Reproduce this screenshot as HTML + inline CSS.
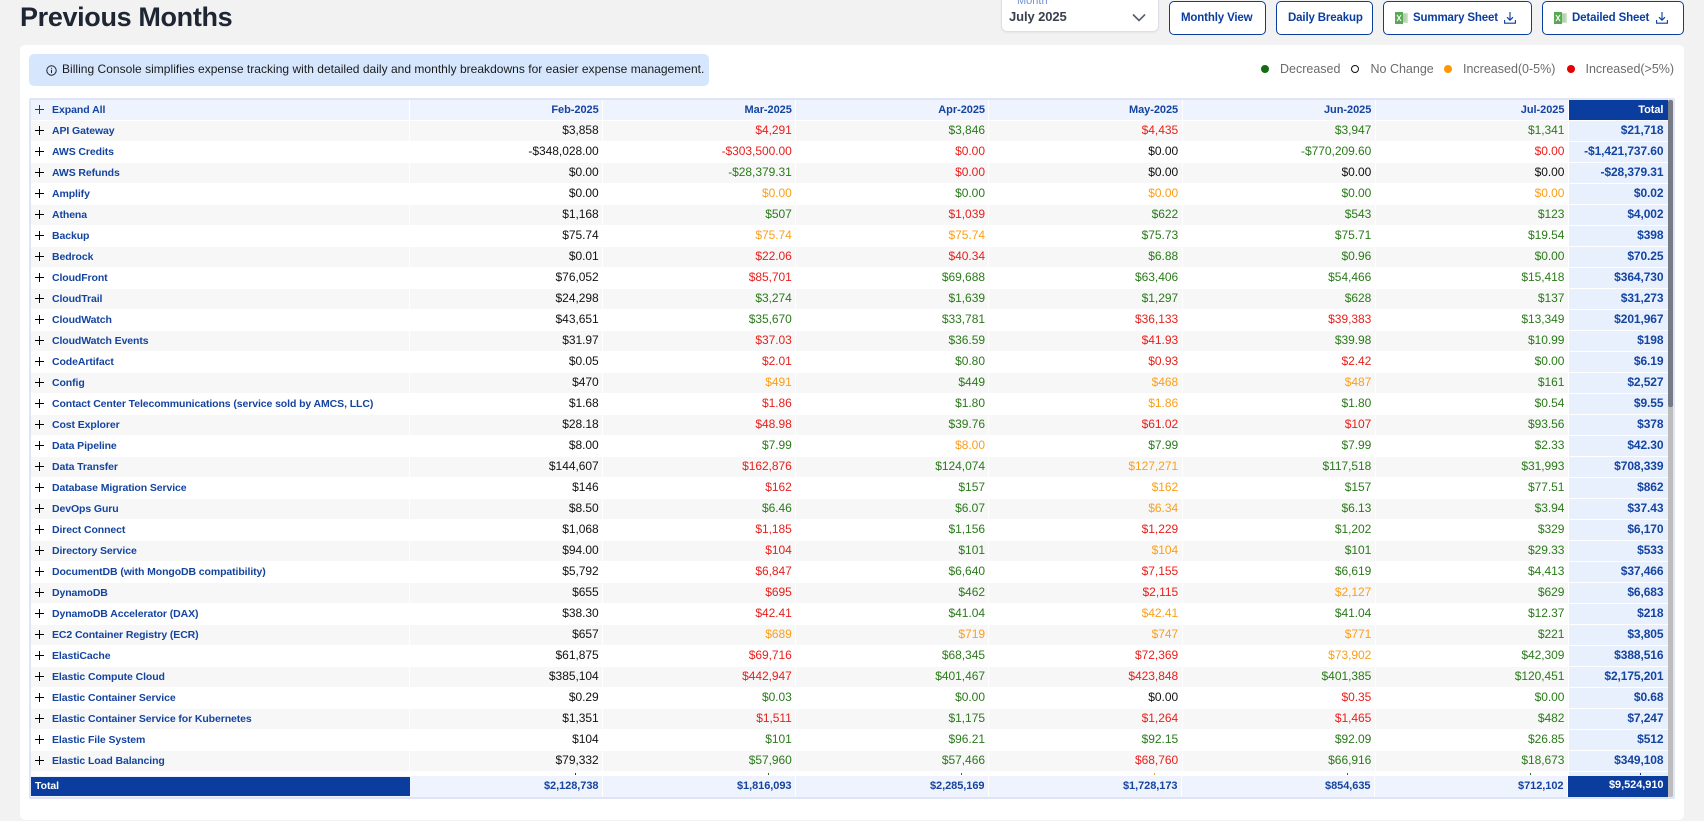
<!DOCTYPE html>
<html><head><meta charset="utf-8"><title>Previous Months</title>
<style>
*{box-sizing:border-box}
html,body{margin:0;padding:0;width:1704px;height:821px;overflow:hidden;background:#f2f2f2;font-family:"Liberation Sans",sans-serif}
.abs{position:absolute}
h1{position:absolute;left:20px;top:1px;margin:0;font-size:27px;line-height:32px;font-weight:700;color:#1e2533;letter-spacing:-.35px}
.sel{position:absolute;left:1001px;top:0;width:158px;height:32px;background:#fff;border:1px solid #dde0e8;border-top:0;border-radius:0 0 6px 6px;box-shadow:0 1px 2px #0000000d}
.sel .l{position:absolute;left:15px;top:-5px;font-size:11px;line-height:13px;color:#6f92d6}
.sel .v{position:absolute;left:7px;top:9px;font-size:13px;line-height:16px;font-weight:700;color:#3a404c;letter-spacing:-.1px}
.sel svg{position:absolute;left:130px;top:13px}
.btn{position:absolute;top:1px;height:34px;border:1.5px solid #0b3d9f;border-radius:5px;background:#fff;color:#0b3d9f;font-size:11.5px;letter-spacing:-.15px;font-weight:700;line-height:32px;white-space:nowrap}
.btn span{position:absolute;top:0}
.btn svg{position:absolute}
.card{position:absolute;left:20px;top:45px;width:1664px;height:775px;background:#fff;border-radius:5px}
.info{position:absolute;left:29px;top:54px;width:680px;height:32px;background:#d6e7fd;border-radius:5px;font-size:12px;letter-spacing:.023px;line-height:31px;color:#1a1a1a;white-space:nowrap}
.info span{position:absolute;left:33px;top:0}
.info svg{position:absolute;left:17px;top:11px}
.lg{position:absolute;top:62px;font-size:12.5px;line-height:15px;color:#6b6b6b;white-space:nowrap}
.dot{position:absolute;top:65px;width:8px;height:8px;border-radius:50%}
.frame{position:absolute;left:29px;top:98px;width:1646px;height:701px;background:#e0e5f5;border-radius:2px}
.inner{position:absolute;left:31px;top:100px;width:1637px;height:697px;background:#fff}
.g1{display:grid;grid-template-columns:379px repeat(6,193.17px) 99px;height:21px;border-top:1px solid #fff}
.g1:nth-child(odd)>*:not(.t){background:#f7f7f7}
.g1>*{display:block;font-size:12px;letter-spacing:-.04px;line-height:19px;height:20px;text-align:right;padding-right:3.5px;border-right:1px solid #fff;white-space:nowrap;color:#111;text-decoration:none;font-style:normal}
.g1>.n{position:relative;text-align:left;padding-left:21px;font-size:10.5px;letter-spacing:-.1px;font-weight:700;color:#14449f;line-height:21px}
.n i{position:absolute;left:4px;top:5px;width:9px;height:9px;background:linear-gradient(#000,#000) 0 4px/9px 1px no-repeat,linear-gradient(#000,#000) 4px 0/1px 9px no-repeat}
.g1>.t{background:#e8f0fe;color:#14449f;font-weight:700;border-right:0;padding-right:4.5px;letter-spacing:-.1px}
.g1>.gr{color:#2a7a1a}.g1>.r{color:#e8201c}.g1>.o{color:#fb9f1a}
.head,.foot{position:absolute;left:31px;display:grid;background:#eff3fd}
.head{top:100px;height:20px;grid-template-columns:379px repeat(6,193.17px) 99px}
.foot{top:776px;height:21px;width:1637px;grid-template-columns:379px repeat(6,193px) 100px}
.head>*,.foot>*{font-size:11px;letter-spacing:-.05px;font-weight:700;color:#14449f;text-align:right;padding-right:3.5px;border-right:1px solid #fff;white-space:nowrap;position:relative}
.head>*{line-height:20px}
.foot>*{line-height:20px}
.head>:first-child{font-size:10.5px}
.navy{background:#0b3d9f;color:#fff !important;border-right:0 !important}
.tick{position:absolute;top:773px;width:1px;height:2px}
.sb{position:absolute;left:1668px;top:100px;width:5px;height:697px;background:#bdbdbd;border-radius:2px}
.sb div{width:5px;height:307px;background:#767b86;border-radius:2px}
</style></head><body>
<h1>Previous Months</h1>
<div class="sel"><div class="l">Month</div><div class="v">July 2025</div><svg width="14" height="9" viewBox="0 0 14 9" fill="none" stroke="#555c68" stroke-width="1.6"><path d="M1 1.5l6 6 6-6"/></svg></div>
<div class="btn" style="left:1169px;width:97px"><span style="left:11px">Monthly View</span></div>
<div class="btn" style="left:1276px;width:97px"><span style="left:11px">Daily Breakup</span></div>
<div class="btn" style="left:1383px;width:149px"><svg style="left:10.5px;top:9.5px" width="13" height="12" viewBox="0 0 13 12"><rect x="6" y="1" width="7" height="10" fill="#cfe5cb"/><path d="M8 3h3.5M8 5h3.5M8 7h3.5M8 9h3.5" stroke="#7db878" stroke-width=".8"/><rect x="0" y="0" width="8" height="12" fill="#5aa854"/><path d="M2 3l4 6M6 3l-4 6" stroke="#fff" stroke-width="1.1"/></svg><span style="left:29px">Summary Sheet</span><svg style="left:119.5px;top:9.5px" width="12" height="12" viewBox="0 0 12 12" fill="none" stroke="#0b3d9f" stroke-width="1.1"><path d="M6 0v8M3 5.2L6 8.2 9 5.2M.6 8v3.2h10.8V8"/></svg></div>
<div class="btn" style="left:1542px;width:142px"><svg style="left:10.5px;top:9.5px" width="13" height="12" viewBox="0 0 13 12"><rect x="6" y="1" width="7" height="10" fill="#cfe5cb"/><path d="M8 3h3.5M8 5h3.5M8 7h3.5M8 9h3.5" stroke="#7db878" stroke-width=".8"/><rect x="0" y="0" width="8" height="12" fill="#5aa854"/><path d="M2 3l4 6M6 3l-4 6" stroke="#fff" stroke-width="1.1"/></svg><span style="left:29px">Detailed Sheet</span><svg style="left:112.5px;top:9.5px" width="12" height="12" viewBox="0 0 12 12" fill="none" stroke="#0b3d9f" stroke-width="1.1"><path d="M6 0v8M3 5.2L6 8.2 9 5.2M.6 8v3.2h10.8V8"/></svg></div>
<div class="card"></div>
<div class="info"><svg width="11" height="11" viewBox="0 0 11 11" fill="none" stroke="#222" stroke-width="1"><circle cx="5.5" cy="5.5" r="4.7"/><path d="M5.5 4.8v3.2M5.5 2.8v1"/></svg><span>Billing Console simplifies expense tracking with detailed daily and monthly breakdowns for easier expense management.</span></div>
<div class="dot" style="left:1261px;background:#146c14"></div><div class="lg" style="left:1280px">Decreased</div>
<div class="dot" style="left:1351px;background:#fff;border:1.5px solid #111"></div><div class="lg" style="left:1370.5px">No Change</div>
<div class="dot" style="left:1444px;background:#ff9800"></div><div class="lg" style="left:1463px">Increased(0-5%)</div>
<div class="dot" style="left:1567px;background:#e60000"></div><div class="lg" style="left:1585.5px">Increased(&gt;5%)</div>
<div class="frame"></div><div class="inner"></div>
<div class="abs" style="left:31px;top:120px;width:1637px;height:651px;overflow:hidden">
<div class="g1"><a class="n"><i></i>API Gateway</a><span>$3,858</span><span class="r">$4,291</span><span class="gr">$3,846</span><span class="r">$4,435</span><span class="gr">$3,947</span><span class="gr">$1,341</span><span class="t">$21,718</span></div>
<div class="g1"><a class="n"><i></i>AWS Credits</a><span>-$348,028.00</span><span class="r">-$303,500.00</span><span class="r">$0.00</span><span>$0.00</span><span class="gr">-$770,209.60</span><span class="r">$0.00</span><span class="t">-$1,421,737.60</span></div>
<div class="g1"><a class="n"><i></i>AWS Refunds</a><span>$0.00</span><span class="gr">-$28,379.31</span><span class="r">$0.00</span><span>$0.00</span><span>$0.00</span><span>$0.00</span><span class="t">-$28,379.31</span></div>
<div class="g1"><a class="n"><i></i>Amplify</a><span>$0.00</span><span class="o">$0.00</span><span class="gr">$0.00</span><span class="o">$0.00</span><span class="gr">$0.00</span><span class="o">$0.00</span><span class="t">$0.02</span></div>
<div class="g1"><a class="n"><i></i>Athena</a><span>$1,168</span><span class="gr">$507</span><span class="r">$1,039</span><span class="gr">$622</span><span class="gr">$543</span><span class="gr">$123</span><span class="t">$4,002</span></div>
<div class="g1"><a class="n"><i></i>Backup</a><span>$75.74</span><span class="o">$75.74</span><span class="o">$75.74</span><span class="gr">$75.73</span><span class="gr">$75.71</span><span class="gr">$19.54</span><span class="t">$398</span></div>
<div class="g1"><a class="n"><i></i>Bedrock</a><span>$0.01</span><span class="r">$22.06</span><span class="r">$40.34</span><span class="gr">$6.88</span><span class="gr">$0.96</span><span class="gr">$0.00</span><span class="t">$70.25</span></div>
<div class="g1"><a class="n"><i></i>CloudFront</a><span>$76,052</span><span class="r">$85,701</span><span class="gr">$69,688</span><span class="gr">$63,406</span><span class="gr">$54,466</span><span class="gr">$15,418</span><span class="t">$364,730</span></div>
<div class="g1"><a class="n"><i></i>CloudTrail</a><span>$24,298</span><span class="gr">$3,274</span><span class="gr">$1,639</span><span class="gr">$1,297</span><span class="gr">$628</span><span class="gr">$137</span><span class="t">$31,273</span></div>
<div class="g1"><a class="n"><i></i>CloudWatch</a><span>$43,651</span><span class="gr">$35,670</span><span class="gr">$33,781</span><span class="r">$36,133</span><span class="r">$39,383</span><span class="gr">$13,349</span><span class="t">$201,967</span></div>
<div class="g1"><a class="n"><i></i>CloudWatch Events</a><span>$31.97</span><span class="r">$37.03</span><span class="gr">$36.59</span><span class="r">$41.93</span><span class="gr">$39.98</span><span class="gr">$10.99</span><span class="t">$198</span></div>
<div class="g1"><a class="n"><i></i>CodeArtifact</a><span>$0.05</span><span class="r">$2.01</span><span class="gr">$0.80</span><span class="r">$0.93</span><span class="r">$2.42</span><span class="gr">$0.00</span><span class="t">$6.19</span></div>
<div class="g1"><a class="n"><i></i>Config</a><span>$470</span><span class="o">$491</span><span class="gr">$449</span><span class="o">$468</span><span class="o">$487</span><span class="gr">$161</span><span class="t">$2,527</span></div>
<div class="g1"><a class="n"><i></i>Contact Center Telecommunications (service sold by AMCS, LLC)</a><span>$1.68</span><span class="r">$1.86</span><span class="gr">$1.80</span><span class="o">$1.86</span><span class="gr">$1.80</span><span class="gr">$0.54</span><span class="t">$9.55</span></div>
<div class="g1"><a class="n"><i></i>Cost Explorer</a><span>$28.18</span><span class="r">$48.98</span><span class="gr">$39.76</span><span class="r">$61.02</span><span class="r">$107</span><span class="gr">$93.56</span><span class="t">$378</span></div>
<div class="g1"><a class="n"><i></i>Data Pipeline</a><span>$8.00</span><span class="gr">$7.99</span><span class="o">$8.00</span><span class="gr">$7.99</span><span class="gr">$7.99</span><span class="gr">$2.33</span><span class="t">$42.30</span></div>
<div class="g1"><a class="n"><i></i>Data Transfer</a><span>$144,607</span><span class="r">$162,876</span><span class="gr">$124,074</span><span class="o">$127,271</span><span class="gr">$117,518</span><span class="gr">$31,993</span><span class="t">$708,339</span></div>
<div class="g1"><a class="n"><i></i>Database Migration Service</a><span>$146</span><span class="r">$162</span><span class="gr">$157</span><span class="o">$162</span><span class="gr">$157</span><span class="gr">$77.51</span><span class="t">$862</span></div>
<div class="g1"><a class="n"><i></i>DevOps Guru</a><span>$8.50</span><span class="gr">$6.46</span><span class="gr">$6.07</span><span class="o">$6.34</span><span class="gr">$6.13</span><span class="gr">$3.94</span><span class="t">$37.43</span></div>
<div class="g1"><a class="n"><i></i>Direct Connect</a><span>$1,068</span><span class="r">$1,185</span><span class="gr">$1,156</span><span class="r">$1,229</span><span class="gr">$1,202</span><span class="gr">$329</span><span class="t">$6,170</span></div>
<div class="g1"><a class="n"><i></i>Directory Service</a><span>$94.00</span><span class="r">$104</span><span class="gr">$101</span><span class="o">$104</span><span class="gr">$101</span><span class="gr">$29.33</span><span class="t">$533</span></div>
<div class="g1"><a class="n"><i></i>DocumentDB (with MongoDB compatibility)</a><span>$5,792</span><span class="r">$6,847</span><span class="gr">$6,640</span><span class="r">$7,155</span><span class="gr">$6,619</span><span class="gr">$4,413</span><span class="t">$37,466</span></div>
<div class="g1"><a class="n"><i></i>DynamoDB</a><span>$655</span><span class="r">$695</span><span class="gr">$462</span><span class="r">$2,115</span><span class="o">$2,127</span><span class="gr">$629</span><span class="t">$6,683</span></div>
<div class="g1"><a class="n"><i></i>DynamoDB Accelerator (DAX)</a><span>$38.30</span><span class="r">$42.41</span><span class="gr">$41.04</span><span class="o">$42.41</span><span class="gr">$41.04</span><span class="gr">$12.37</span><span class="t">$218</span></div>
<div class="g1"><a class="n"><i></i>EC2 Container Registry (ECR)</a><span>$657</span><span class="o">$689</span><span class="o">$719</span><span class="o">$747</span><span class="o">$771</span><span class="gr">$221</span><span class="t">$3,805</span></div>
<div class="g1"><a class="n"><i></i>ElastiCache</a><span>$61,875</span><span class="r">$69,716</span><span class="gr">$68,345</span><span class="r">$72,369</span><span class="o">$73,902</span><span class="gr">$42,309</span><span class="t">$388,516</span></div>
<div class="g1"><a class="n"><i></i>Elastic Compute Cloud</a><span>$385,104</span><span class="r">$442,947</span><span class="gr">$401,467</span><span class="r">$423,848</span><span class="gr">$401,385</span><span class="gr">$120,451</span><span class="t">$2,175,201</span></div>
<div class="g1"><a class="n"><i></i>Elastic Container Service</a><span>$0.29</span><span class="gr">$0.03</span><span class="gr">$0.00</span><span>$0.00</span><span class="r">$0.35</span><span class="gr">$0.00</span><span class="t">$0.68</span></div>
<div class="g1"><a class="n"><i></i>Elastic Container Service for Kubernetes</a><span>$1,351</span><span class="r">$1,511</span><span class="gr">$1,175</span><span class="r">$1,264</span><span class="r">$1,465</span><span class="gr">$482</span><span class="t">$7,247</span></div>
<div class="g1"><a class="n"><i></i>Elastic File System</a><span>$104</span><span class="gr">$101</span><span class="gr">$96.21</span><span class="gr">$92.15</span><span class="gr">$92.09</span><span class="gr">$26.85</span><span class="t">$512</span></div>
<div class="g1"><a class="n"><i></i>Elastic Load Balancing</a><span>$79,332</span><span class="gr">$57,960</span><span class="gr">$57,466</span><span class="r">$68,760</span><span class="gr">$66,916</span><span class="gr">$18,673</span><span class="t">$349,108</span></div>
</div>
<div class="abs" style="left:1569px;top:772px;width:99px;height:4px;background:#e8f0fe"></div>
<div class="tick" style="left:575px;background:#333"></div><div class="tick" style="left:768px;background:#2a7a1a"></div><div class="tick" style="left:961px;background:#2a7a1a"></div><div class="tick" style="left:1154px;background:#fb9f1a"></div><div class="tick" style="left:1347px;background:#2a7a1a"></div><div class="tick" style="left:1530px;background:#2a7a1a"></div><div class="tick" style="left:1640px;background:#0b3d9f"></div>
<div class="head">
<div style="text-align:left;padding-left:21px"><span style="position:absolute;left:4px;top:5px;width:9px;height:9px;background:linear-gradient(#0b3d9f,#0b3d9f) 0 4px/9px 1px no-repeat,linear-gradient(#0b3d9f,#0b3d9f) 4px 0/1px 9px no-repeat"></span>Expand All</div>
<div>Feb-2025</div><div>Mar-2025</div><div>Apr-2025</div><div>May-2025</div><div>Jun-2025</div><div>Jul-2025</div><div class="navy" style="padding-right:4.5px">Total</div></div>
<div class="foot">
<div class="navy" style="text-align:left;padding-left:4px;margin:1px 0;line-height:18px;font-size:10.5px">Total</div>
<div>$2,128,738</div><div>$1,816,093</div><div>$2,285,169</div><div>$1,728,173</div><div>$854,635</div><div>$712,102</div><div class="navy" style="padding-right:4.5px;line-height:18px">$9,524,910</div></div>
<div class="sb"><div></div></div>
</body></html>
